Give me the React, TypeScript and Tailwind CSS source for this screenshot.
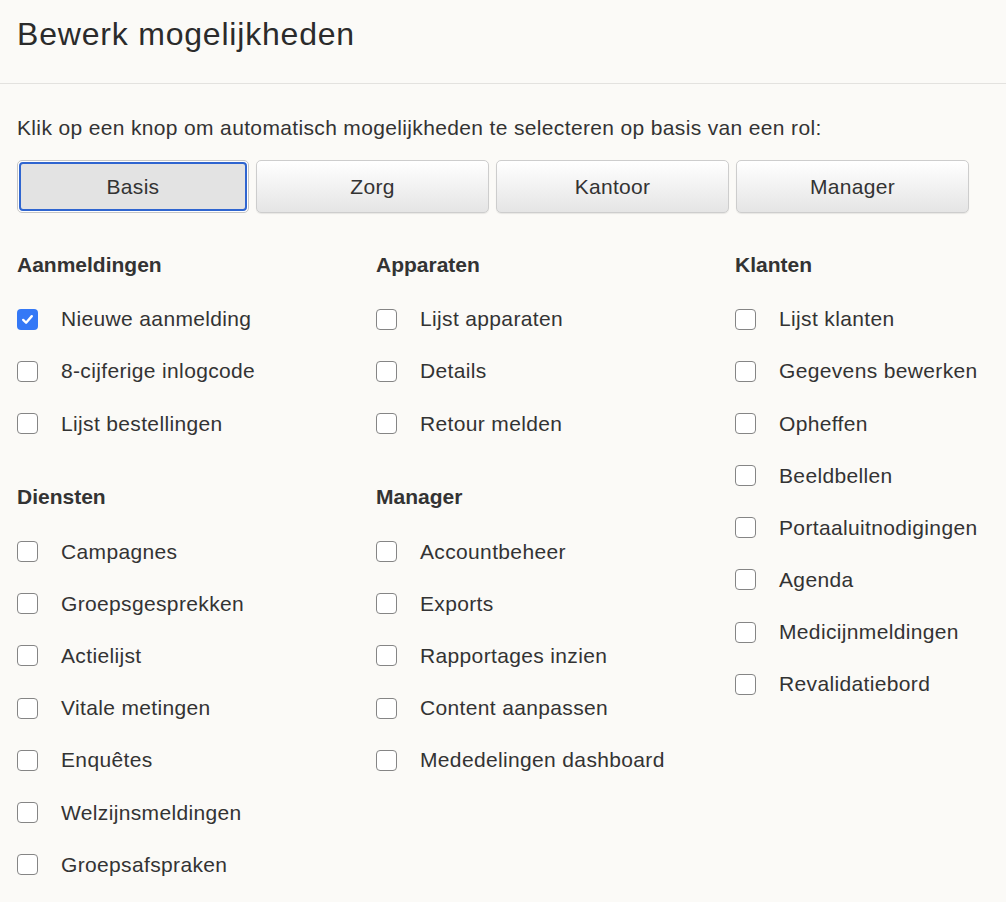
import React from "react";

const roles = ["Basis", "Zorg", "Kantoor", "Manager"];

type Section = { title: string; items: string[] };

const columns: Section[][] = [
  [
    { title: "Aanmeldingen", items: ["Nieuwe aanmelding", "8-cijferige inlogcode", "Lijst bestellingen"] },
    {
      title: "Diensten",
      items: ["Campagnes", "Groepsgesprekken", "Actielijst", "Vitale metingen", "Enquêtes", "Welzijnsmeldingen", "Groepsafspraken"],
    },
  ],
  [
    { title: "Apparaten", items: ["Lijst apparaten", "Details", "Retour melden"] },
    {
      title: "Manager",
      items: ["Accountbeheer", "Exports", "Rapportages inzien", "Content aanpassen", "Mededelingen dashboard"],
    },
  ],
  [
    {
      title: "Klanten",
      items: [
        "Lijst klanten",
        "Gegevens bewerken",
        "Opheffen",
        "Beeldbellen",
        "Portaaluitnodigingen",
        "Agenda",
        "Medicijnmeldingen",
        "Revalidatiebord",
      ],
    },
  ],
];

const initialChecked: Record<string, boolean> = { "Nieuwe aanmelding": true };

function Checkbox({ checked, onToggle }: { checked: boolean; onToggle: () => void }) {
  return (
    <button
      type="button"
      onClick={onToggle}
      className={
        checked
          ? "flex h-[21px] w-[21px] shrink-0 items-center justify-center rounded-[4px] bg-[#3478f6]"
          : "h-[21px] w-[21px] shrink-0 rounded-[4px] border-[1.5px] border-[#858585] bg-white"
      }
    >
      {checked && (
        <svg viewBox="0 0 16 16" className="h-[15px] w-[15px]">
          <path d="M3.4 8.4 6.5 11.5 12.6 4.4" fill="none" stroke="white" strokeWidth="2.5" strokeLinecap="round" strokeLinejoin="round" />
        </svg>
      )}
    </button>
  );
}

export default function App() {
  const [active, setActive] = React.useState("Basis");
  const [checked, setChecked] = React.useState(initialChecked);

  const toggle = (name: string) => setChecked((prev) => ({ ...prev, [name]: !prev[name] }));

  return (
    <div className="min-h-[902px] w-[1006px] bg-[#fbfaf7] font-['Liberation_Sans',Arial,sans-serif] text-[#333]">
      <div className="h-[84px] border-b border-[#e3e2df] px-[17px] pt-[14px]">
        <h1 className="text-[32px] leading-[40px] font-normal tracking-[0.8px] text-[#2b2b2b]">Bewerk mogelijkheden</h1>
      </div>

      <div className="px-[17px] pb-[20px]">
        <p className="mt-[31px] text-[21px] leading-[26px] tracking-[0.35px]">
          Klik op een knop om automatisch mogelijkheden te selecteren op basis van een rol:
        </p>

        <div className="mt-[19px] flex gap-[7px]">
          {roles.map((role) =>
            role === active ? (
              <button
                key={role}
                type="button"
                className="h-[53px] w-[232px] rounded-[5px] border border-[#c6c6c6] bg-white p-[1px]"
                onClick={() => setActive(role)}
              >
                <span className="flex h-full w-full items-center justify-center rounded-[4px] border-2 border-[#2f65d0] bg-[#e3e3e3] text-[21px] tracking-[0.3px]">
                  {role}
                </span>
              </button>
            ) : (
              <button
                key={role}
                type="button"
                onClick={() => setActive(role)}
                className="h-[53px] w-[233px] rounded-[5px] border border-[#cdcdcd] bg-gradient-to-b from-white to-[#e5e5e5] text-[21px] tracking-[0.3px] shadow-[0_1px_1px_rgba(0,0,0,0.08)]"
              >
                {role}
              </button>
            )
          )}
        </div>

        <div className="mt-[38px] grid grid-cols-[359px_359px_1fr]">
          {columns.map((sections, ci) => (
            <div key={ci} className="flex flex-col gap-[34px]">
              {sections.map((section) => (
                <div key={section.title}>
                  <h2 className="h-[28px] text-[21px] leading-[28px] font-bold">{section.title}</h2>
                  <ul className="mt-[14px]">
                    {section.items.map((item) => (
                      <li key={item} className="flex h-[52.17px] items-center gap-[23px] text-[21px] tracking-[0.35px]">
                        <Checkbox checked={!!checked[item]} onToggle={() => toggle(item)} />
                        <span>{item}</span>
                      </li>
                    ))}
                  </ul>
                </div>
              ))}
            </div>
          ))}
        </div>
      </div>
    </div>
  );
}
